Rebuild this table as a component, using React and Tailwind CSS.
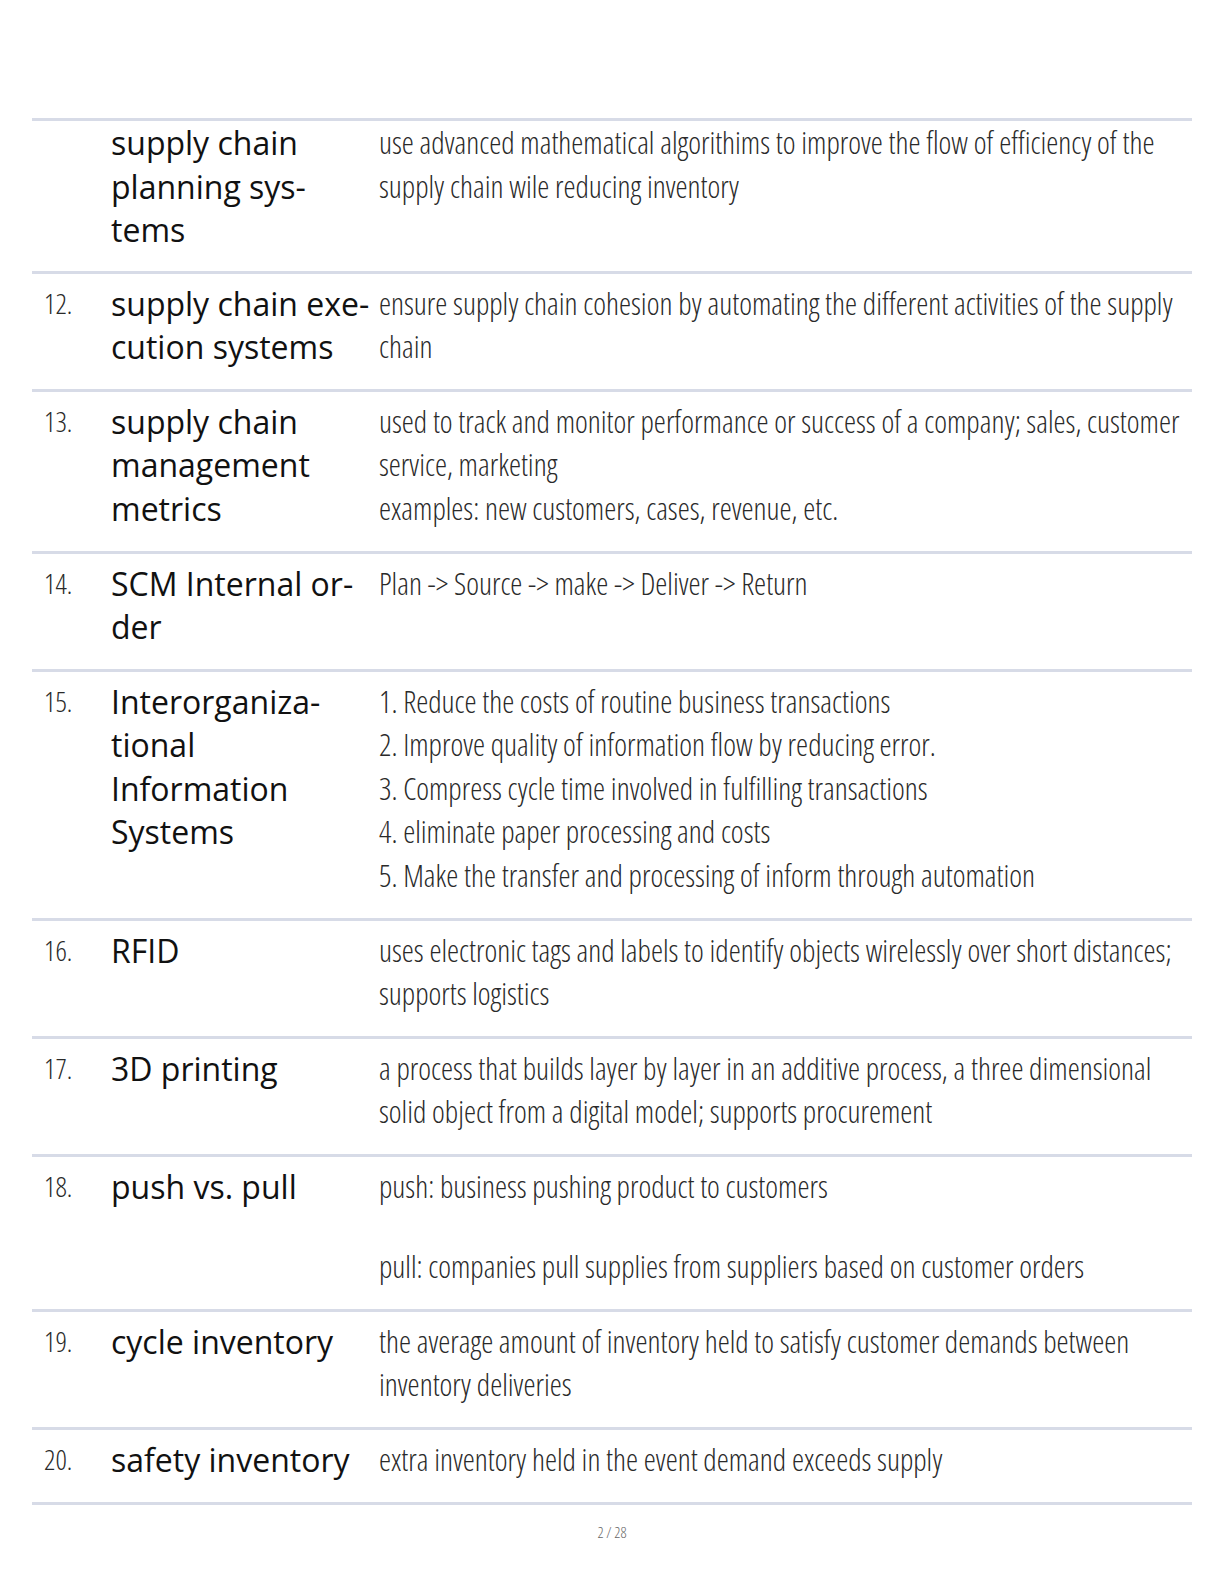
import React from "react";

const rows = [
  { n: "", t: ["supply chain", "planning sys-", "tems"], d: [["use advanced mathematical algorithims to improve the flow of efficiency of the", "supply chain wile reducing inventory"]], first: true },
  { n: "12.", t: ["supply chain exe-", "cution systems"], d: [["ensure supply chain cohesion by automating the different activities of the supply", "chain"]] },
  { n: "13.", t: ["supply chain", "management", "metrics"], d: [["used to track and monitor performance or success of a company; sales, customer", "service, marketing", "examples: new customers, cases, revenue, etc."]] },
  { n: "14.", t: ["SCM Internal or-", "der"], d: [["Plan -> Source -> make -> Deliver -> Return"]] },
  { n: "15.", t: ["Interorganiza-", "tional", "Information", "Systems"], d: [["1. Reduce the costs of routine business transactions", "2. Improve quality of information flow by reducing error.", "3. Compress cycle time involved in fulfilling transactions", "4. eliminate paper processing and costs", "5. Make the transfer and processing of inform through automation"]] },
  { n: "16.", t: ["RFID"], d: [["uses electronic tags and labels to identify objects wirelessly over short distances;", "supports logistics"]] },
  { n: "17.", t: ["3D printing"], d: [["a process that builds layer by layer in an additive process, a three dimensional", "solid object from a digital model; supports procurement"]] },
  { n: "18.", t: ["push vs. pull"], d: [["push: business pushing product to customers"], ["pull: companies pull supplies from suppliers based on customer orders"]] },
  { n: "19.", t: ["cycle inventory"], d: [["the average amount of inventory held to satisfy customer demands between", "inventory deliveries"]] },
  { n: "20.", t: ["safety inventory"], d: [["extra inventory held in the event demand exceeds supply"]] },
];

const cond = "font-['Open_Sans','Liberation_Sans',sans-serif] font-light [font-stretch:75%]";

export default function App() {
  return (
    <div className="w-[1224px] h-[1584px] bg-white pt-[118px]">
      <div className="ml-[32px] w-[1160px] border-t-[3px] border-[#d7dbe7]">
        {rows.map((r, i) => (
          <div
            key={i}
            className={`grid grid-cols-[67px_268px_1fr] pl-[12px] border-b-[3px] border-[#d7dbe7] ${r.first ? "pt-0 pb-[19px]" : "pt-[8px] pb-[20.3px]"}`}
          >
            <div className={`${cond} text-[28px] leading-[43.5px] text-[#2a2a2a]`}>{r.n}</div>
            <div className="font-['Open_Sans','Noto_Sans',sans-serif] text-[32px] leading-[43.5px] text-[#111]">
              {r.t.map((l, j) => (
                <div key={j} className="whitespace-nowrap">{l}</div>
              ))}
            </div>
            <div className={`${cond} text-[30.5px] leading-[43.5px] text-[#2a2a2a] flex flex-col gap-[36px]`}>
              {r.d.map((p, j) => (
                <div key={j}>
                  {p.map((l, k) => (
                    <div key={k} className="whitespace-nowrap">{l}</div>
                  ))}
                </div>
              ))}
            </div>
          </div>
        ))}
      </div>
      <div className={`${cond} text-center text-[15px] leading-[20px] text-[#666] mt-[17px]`}>2 / 28</div>
    </div>
  );
}
